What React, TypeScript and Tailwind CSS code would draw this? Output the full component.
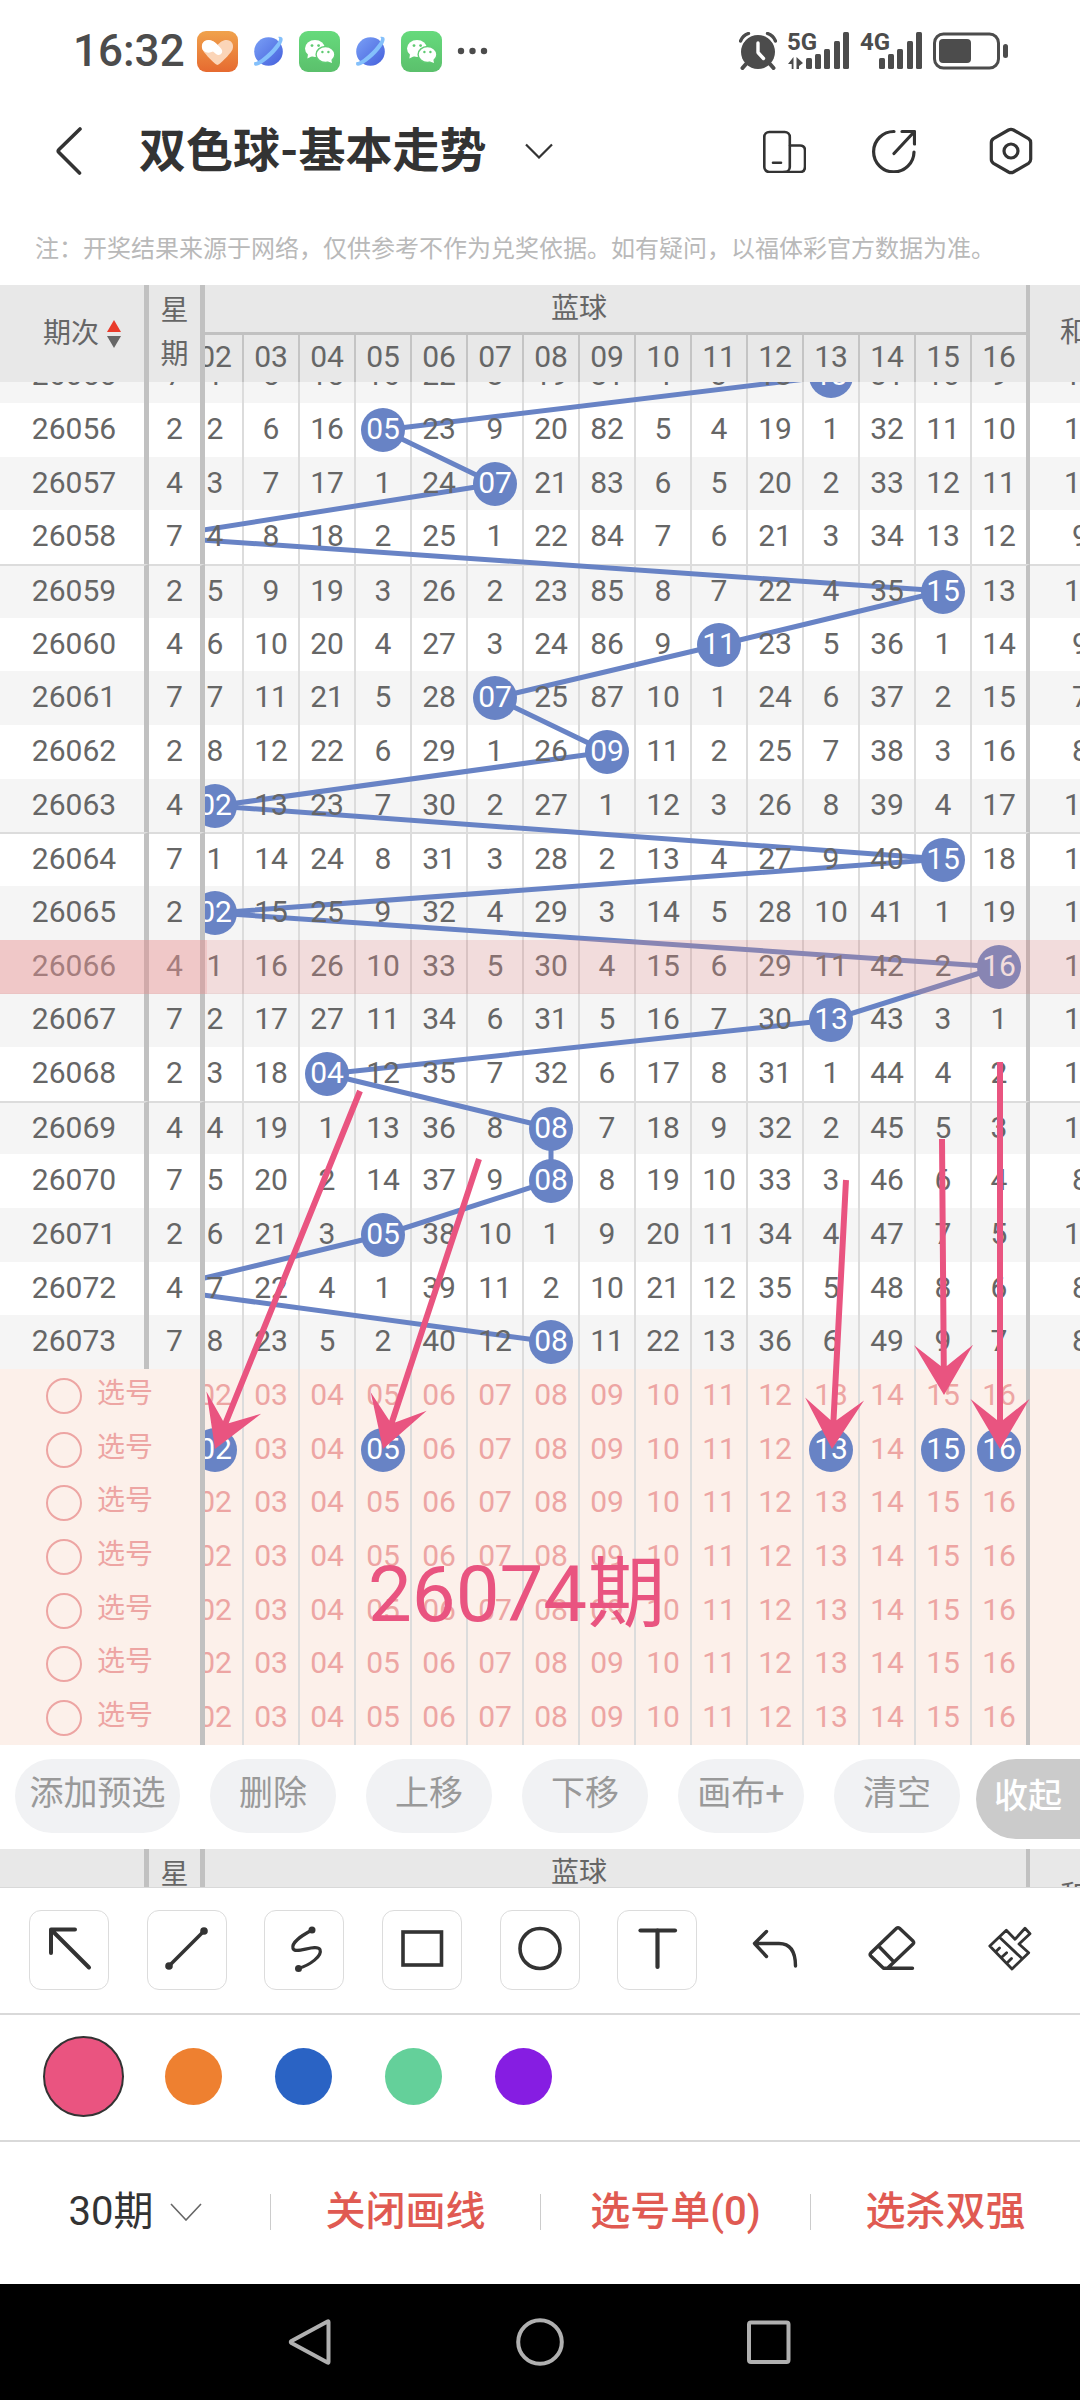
import { useState } from "react";
import type { ReactNode } from "react";

const balls = [2, 3, 4, 5, 6, 7, 8, 9, 10, 11, 12, 13, 14, 15, 16];

// winning blue ball of each issue, first one is 26055
const FIRST_ISSUE = 26055;
const hits = [13, 5, 7, 1, 15, 11, 7, 9, 2, 15, 2, 16, 13, 4, 8, 8, 5, 1, 8];
const sums = ["1", "1", "1", "9", "1", "9", "7", "8", "1", "1", "1", "1", "1", "1", "1", "8", "1", "8", "8"];
const weekdays = [7, 2, 4];
const firstMisses = [1, 5, 15, 16, 22, 8, 19, 81, 4, 3, 18, 0, 31, 10, 9];

const picks: number[][] = [[], [2, 5, 13, 15, 16], [], [], [], [], []];
const SELECTED_ISSUE = 26066;

const colors = [
  { name: "粉色", bg: "bg-[#ea5480]" },
  { name: "橙色", bg: "bg-[#ee8030]" },
  { name: "蓝色", bg: "bg-[#2a63c4]" },
  { name: "绿色", bg: "bg-[#64d09a]" },
  { name: "紫色", bg: "bg-[#861de2]" }
];

const arrows = [
  { x1: 360, y1: 742, x2: 215, y2: 1100 },
  { x1: 479, y1: 810, x2: 383, y2: 1100 },
  { x1: 846, y1: 831, x2: 832, y2: 1100 },
  { x1: 942, y1: 790, x2: 944, y2: 1046 },
  { x1: 1000, y1: 713, x2: 1000, y2: 1100 }
];

const pad = (n: number) => String(n).padStart(2, "0");

// rows are 54, 54, 53 px tall, repeating
const rowTop = (i: number) => i * 54 - Math.floor(i / 3);

function buildRows() {
  let misses = firstMisses;
  return hits.map((hit, i) => {
    if (i > 0) {
      misses = misses.map((m, b) => (hit === balls[b] ? 0 : m + 1));
    }
    return { issue: FIRST_ISSUE + i, week: weekdays[i % 3], hit, misses, sum: sums[i] };
  });
}

const rows = buildRows();

function WechatIcon() {
  return (
    <svg className="size-[41px]" viewBox="0 0 41 41">
      <defs>
        <linearGradient id="wx" x1="0" y1="0" x2="0" y2="1">
          <stop offset="0" stopColor="#66da7c" />
          <stop offset="1" stopColor="#5bc06c" />
        </linearGradient>
      </defs>
      <rect width="41" height="41" rx="9" fill="url(#wx)" />
      <ellipse cx="16" cy="17.5" rx="10" ry="8.5" fill="#fff" />
      <path d="M9 23l-.6 4.4 5-2.4z" fill="#fff" />
      <ellipse cx="26.5" cy="23.5" rx="9.4" ry="8" fill="#fff" stroke="#61cd75" strokeWidth="1.4" />
      <path d="M29 30.5l4 1.6-.8-4z" fill="#fff" />
      <circle cx="13" cy="14.6" r="1.4" fill="#5fca72" />
      <circle cx="19.6" cy="14.6" r="1.4" fill="#5fca72" />
      <circle cx="23.4" cy="21" r="1.2" fill="#5fca72" />
      <circle cx="29.4" cy="21" r="1.2" fill="#5fca72" />
    </svg>
  );
}

function PlanetIcon() {
  return (
    <svg className="size-[41px]" viewBox="0 0 41 41">
      <defs>
        <linearGradient id="planet" x1="0" y1="0" x2="1" y2="1">
          <stop offset="0" stopColor="#7aa0f6" />
          <stop offset="1" stopColor="#4560dc" />
        </linearGradient>
      </defs>
      <circle cx="20.5" cy="20.5" r="14.3" fill="url(#planet)" />
      <path
        d="M6.5 31c-1.4 3.2.4 4.6 4.4 3 7-3 18-13 22.5-21.5 2.2-4.5 1.8-7.5-3.4-6.5 2.2 1 1 3.6-1.8 7.2C23 20 16.5 26 11.5 29.2c-2.4 1.4-4 1.9-5 1.8z"
        fill="#84c0fb"
      />
    </svg>
  );
}

function HeartIcon() {
  return (
    <svg className="size-[41px]" viewBox="0 0 41 41">
      <defs>
        <linearGradient id="heart" x1="0" y1="0" x2="0" y2="1">
          <stop offset="0" stopColor="#f0a24c" />
          <stop offset="1" stopColor="#e66a30" />
        </linearGradient>
      </defs>
      <rect width="41" height="41" rx="9" fill="url(#heart)" />
      <path
        d="M20.5 34c-1.6 0-13.5-11.5-15-15.5C3.5 13 7 9 11.5 9c4 0 6.5 2.5 9 5 2.5-2.5 5-5 9-5 4.5 0 8 4 6 9.5C34 22.5 22.1 34 20.5 34z"
        fill="#fbd5b8"
      />
      <path
        d="M5.5 18.5C3.5 13 7 9 11.5 9c5 0 8.500 4 12.500 8.500 3.500 4-1.500 8.500-5 5.500l-3-2.500c-4 2-7.500 1.500-10.500-2z"
        fill="#fff"
      />
    </svg>
  );
}

function Signal({ label, data }: { label: string; data?: boolean }) {
  return (
    <svg className="h-[41px] w-[63px] overflow-visible" viewBox="0 0 63 41" fill="#4c4c4c">
      <text x="0" y="19" fontSize="24" fontWeight="700" fontFamily="Roboto, sans-serif">
        {label}
      </text>
      {data && <path d="M6.500 26v12h-1.800v-5H1zM9.500 38V26l6.500 6-4 3v3z" />}
      <rect x="19" y="27" width="6" height="11" rx="1.5" />
      <rect x="28" y="23" width="6" height="15" rx="1.5" />
      <rect x="37" y="18" width="6" height="20" rx="1.5" />
      <rect x="47" y="10" width="6" height="28" rx="1.5" />
      <rect x="56" y="1" width="6" height="37" rx="1.5" />
    </svg>
  );
}

function StatusBar() {
  return (
    <div className="flex h-[102px] items-center justify-between pl-[73px] pr-[70px] text-[#4c4c4c]">
      <div className="flex items-center gap-2.5">
        <span className="w-[114px] text-[44px] font-medium leading-none">16:32</span>
        <HeartIcon />
        <PlanetIcon />
        <WechatIcon />
        <PlanetIcon />
        <WechatIcon />
        <svg className="size-[41px]" viewBox="0 0 41 41" fill="#4c4c4c">
          <circle cx="9" cy="20" r="3.2" />
          <circle cx="20.5" cy="20" r="3.2" />
          <circle cx="32" cy="20" r="3.2" />
        </svg>
      </div>
      <div className="flex items-center gap-2.5">
        <svg className="size-[38px]" viewBox="0 0 38 38">
          <circle cx="19" cy="20" r="17" fill="#4c4c4c" />
          <path d="M7 32l-3.500 4M31 32l3.500 4" stroke="#4c4c4c" strokeWidth="4" strokeLinecap="round" />
          <path d="M2 9.500c1.500-4 4-6.500 8-7.500M36 9.500c-1.500-4-4-6.500-8-7.500" fill="none" stroke="#fff" strokeWidth="6" />
          <path d="M1.500 9c1.500-3.500 3.500-6 8-7.500M36.500 9c-1.500-3.500-3.500-6-8-7.500" fill="none" stroke="#4c4c4c" strokeWidth="3.400" strokeLinecap="round" />
          <path d="M19 11v9.500l5.500 6" fill="none" stroke="#fff" strokeWidth="3.400" strokeLinecap="round" strokeLinejoin="round" />
        </svg>
        <Signal label="5G" data />
        <Signal label="4G" />
        <svg className="h-[38px] w-[77px]" viewBox="0 0 77 38">
          <rect x="1.5" y="2" width="64" height="34" rx="9" fill="none" stroke="#4c4c4c" strokeWidth="3" />
          <rect x="6" y="7" width="32" height="24" rx="4" fill="#4c4c4c" />
          <rect x="70" y="12" width="5" height="14" rx="2.5" fill="#4c4c4c" />
        </svg>
      </div>
    </div>
  );
}

function TitleBar() {
  return (
    <header className="flex h-[98px] items-center pl-12 pr-10 text-[#333]">
      <button aria-label="返回" className="w-[91px]">
        <svg className="h-12 w-11" viewBox="0 0 44 48" fill="none" stroke="#333" strokeWidth="3.6" strokeLinecap="round" strokeLinejoin="round">
          <path d="M32 2L11 22.500q-1.500 1.500 0 3L31.500 46" />
        </svg>
      </button>
      <button className="flex items-center gap-[38px]">
        <h1 className="text-[47px] font-bold leading-[60px]">双色球-基本走势</h1>
        <svg className="h-4 w-7" viewBox="0 0 28 16" fill="none" stroke="#333" strokeWidth="2.2">
          <path d="M1 1.500l13 13 13-13" />
        </svg>
      </button>
      <div className="ml-auto flex items-center gap-[66px]">
        <button aria-label="横屏">
          <svg className="size-11" viewBox="0 0 44 44" fill="none" stroke="#333" strokeWidth="2.6" strokeLinecap="round">
            <rect x="2.3" y="3" width="25.5" height="40" rx="5" />
            <path d="M28 16.500h10q5 0 5 5v16q0 5.500-5 5.500H22M11 33.800h8" />
          </svg>
        </button>
        <button aria-label="分享">
          <svg className="size-11" viewBox="0 0 44 44" fill="none" stroke="#333" strokeWidth="3.2" strokeLinecap="round" strokeLinejoin="round">
            <path d="M22 2.500A20.200 20.200 0 1 0 42 23M22 24.500L42 3M30 2.500h12.500V15" />
          </svg>
        </button>
        <button aria-label="设置" className="flex w-[58px] justify-center">
          <svg className="h-12 w-11" viewBox="0 0 44 48" fill="none" stroke="#333" strokeWidth="3.2" strokeLinejoin="round">
            <path d="M19.500 3q2.500-1.300 5 0l15 8.700q2.200 1.400 2.200 4v16.600q0 2.600-2.200 4L24.500 45q-2.500 1.300-5 0l-15-8.700q-2.200-1.400-2.200-4V15.700q0-2.600 2.200-4z" />
            <circle cx="22" cy="24" r="7" />
          </svg>
        </button>
      </div>
    </header>
  );
}

function TableHead({ sortable }: { sortable?: boolean }) {
  return (
    <div className="flex bg-[#e8e8e8] text-[28px] leading-none text-[#666]">
      <table className="w-[205px] shrink-0 table-fixed border-separate border-spacing-0">
        <thead>
          <tr className="h-[97px]">
            <th className="w-[149px] border-r-5 border-[#c1c1c1] p-0 font-normal">
              {sortable && (
                <button className="mx-auto flex items-center gap-2 pl-5">
                  期次
                  <svg className="h-7 w-3.5" viewBox="0 0 14 28">
                    <path d="M7 0l7 12H0z" fill="#e93a2a" />
                    <path d="M7 28l7-12H0z" fill="#666" />
                  </svg>
                </button>
              )}
            </th>
            <th className="border-r-5 border-[#c1c1c1] p-0 px-2.5 pb-0.5 font-normal leading-[44px]">
              星<br />期
            </th>
          </tr>
        </thead>
      </table>
      <div className="min-w-0 flex-1 overflow-hidden">
        <div className="-ml-[17px]">
          <table className="w-full table-fixed border-separate border-spacing-0">
            <colgroup>
              {balls.map((b) => (
                <col key={b} className={b === 16 ? "w-[58px]" : "w-14"} />
              ))}
              <col />
            </colgroup>
            <thead>
              <tr className="h-[50px]">
                <th colSpan={15} className="border-b-3 border-r-4 border-[#c1c1c1] p-0 pr-14 font-normal">
                  蓝球
                </th>
                <th rowSpan={2} className="p-0 pb-0.5 pl-[30px] text-left font-normal">
                  和
                </th>
              </tr>
              <tr className="h-[47px] text-[30px]">
                {balls.map((b) => (
                  <th
                    key={b}
                    className={b === 16 ? "border-r-4 border-[#c1c1c1] p-0 pb-1 font-normal" : "border-r-2 border-[#c4c4c4] p-0 pb-1 font-normal"}
                  >
                    {pad(b)}
                  </th>
                ))}
              </tr>
            </thead>
          </table>
        </div>
      </div>
    </div>
  );
}

const cell = "relative mx-auto flex size-11 items-center justify-center rounded-full pb-0.5";
const hitCell = "relative mx-auto flex size-11 items-center justify-center rounded-full bg-[#6883c5] pb-0.5 text-white";

function rowClass(i: number) {
  return i % 2 === 0 ? "h-[54px] bg-[#f5f5f5] nth-[3n]:h-[53px]" : "h-[54px] bg-white nth-[3n]:h-[53px]";
}

// a rule separates every five issues
function ruleClass(issue: number) {
  return issue % 5 === 4 ? "border-t-2 border-t-[#dcdcdc]" : "";
}

function IssueTable() {
  return (
    <table className="w-[205px] shrink-0 table-fixed border-separate border-spacing-0">
      <colgroup>
        <col className="w-[149px]" />
        <col className="w-14" />
      </colgroup>
      <tbody>
        {rows.map((row, i) => (
          <tr key={row.issue} className={rowClass(i)}>
            <td className={`border-r-5 border-r-[#c1c1c1] p-0 pb-0.5 pl-1 text-center ${ruleClass(row.issue)}`}>{row.issue}</td>
            <td className={`border-r-5 border-r-[#c1c1c1] p-0 pb-0.5 text-center ${ruleClass(row.issue)}`}>{row.week}</td>
          </tr>
        ))}
        {picks.map((_, i) => (
          <tr key={i} className="h-[54px] bg-[#fcf0ea] nth-[3n]:h-[53px]">
            <td colSpan={2} className="border-r-5 border-r-[#c1c1c1] p-0">
              <label className="flex items-center gap-[15px] pl-[46px] text-[28px] text-[#eda5a3]">
                <input type="radio" name="pick" className="size-9 appearance-none rounded-full border-2 border-[#eda5a3]" />
                <span className="pb-1">选号</span>
              </label>
            </td>
          </tr>
        ))}
      </tbody>
    </table>
  );
}

function TrendTable() {
  const points = hits.map((hit, i) => `${27 + (hit - 2) * 56},${rowTop(i) + 27}`).join(" ");

  return (
    <div className="min-w-0 flex-1 overflow-hidden">
      <div className="relative -ml-[17px]">
        <svg className="absolute inset-0 size-full" fill="none" stroke="#6883c5" strokeWidth="5">
          <polyline points={points} />
        </svg>
        <table className="w-full table-fixed border-separate border-spacing-0">
          <colgroup>
            {balls.map((b) => (
              <col key={b} className={b === 16 ? "w-[58px]" : "w-14"} />
            ))}
            <col />
          </colgroup>
          <tbody>
            {rows.map((row, i) => (
              <tr key={row.issue} className={rowClass(i)}>
                {balls.map((b, c) => (
                  <td
                    key={b}
                    className={`p-0 ${b === 16 ? "border-r-4 border-r-[#c1c1c1]" : "border-r-2 border-r-[#dcdcdc]"} ${ruleClass(row.issue)}`}
                  >
                    {row.hit === b ? <span className={hitCell}>{pad(b)}</span> : <span className={cell}>{row.misses[c]}</span>}
                  </td>
                ))}
                <td className={`p-0 pb-0.5 ${row.sum === "1" ? "pl-[34px]" : "pl-[42px]"} ${ruleClass(row.issue)}`}>{row.sum}</td>
              </tr>
            ))}
            {picks.map((picked, i) => (
              <tr key={i} className="h-[54px] bg-[#fcf0ea] text-[#eda5a3] nth-[3n]:h-[53px]">
                {balls.map((b) => (
                  <td key={b} className={b === 16 ? "border-r-4 border-[#c1c1c1] p-0" : "border-r-2 border-[#dcdcdc] p-0"}>
                    <button className={picked.includes(b) ? hitCell : cell}>{pad(b)}</button>
                  </td>
                ))}
                <td className="p-0" />
              </tr>
            ))}
          </tbody>
        </table>
      </div>
    </div>
  );
}

function Arrow({ x1, y1, x2, y2 }: { x1: number; y1: number; x2: number; y2: number }) {
  const length = Math.hypot(x2 - x1, y2 - y1);
  const angle = (Math.atan2(y2 - y1, x2 - x1) * 180) / Math.PI - 90;
  return (
    <g transform={`translate(${x2} ${y2}) rotate(${angle})`}>
      <path d={`M-3 ${-length}H3V-29L29.5-50 0 0-29.5-50-3-29z`} />
    </g>
  );
}

function Chart() {
  const selectedTop = rowTop(SELECTED_ISSUE - FIRST_ISSUE);

  return (
    <div className="overflow-hidden">
      <div className="relative -mt-[33px] flex text-[30px] leading-none text-[#666]">
        <IssueTable />
        <TrendTable />
        <div className="absolute inset-x-0 h-[54px] bg-[#d48c8c]/30" style={{ top: selectedTop }} />
        <div className="absolute left-0 h-[54px] w-[207px] bg-[#ec9c9c]/30" style={{ top: selectedTop }} />
        <svg className="pointer-events-none absolute inset-0 size-full" fill="#e95480">
          {arrows.map((a) => (
            <Arrow key={a.x1} {...a} />
          ))}
        </svg>
        <div className="absolute left-[368px] top-[1207px] text-[78px] text-[#e95480]">26074期</div>
      </div>
    </div>
  );
}

function ActionBar() {
  return (
    <div className="flex h-[104px] items-start pl-[15px] pt-3.5 text-[34px] leading-none text-[#999]">
      <div className="flex gap-[30px]">
        <button className="h-[74px] w-[165px] rounded-full bg-[#f1f2f4] pb-1.5">添加预选</button>
        {["删除", "上移", "下移", "画布+", "清空"].map((label) => (
          <button key={label} className="h-[74px] w-[126px] rounded-full bg-[#f1f2f4] pb-1.5">
            {label}
          </button>
        ))}
      </div>
      <button className="ml-auto h-20 w-[104px] rounded-l-full bg-[#cbcbcb] pb-1.5 font-medium text-white">收起</button>
    </div>
  );
}

function Tool({ label, framed, children }: { label: string; framed?: boolean; children: ReactNode }) {
  return (
    <button aria-label={label} className={framed ? "size-20 rounded-xl border border-[#dcdcdc]" : "size-20 border border-transparent"}>
      <svg className="-m-px size-20" viewBox="0 0 80 80" fill="none" stroke="#333" strokeWidth="3.6" strokeLinecap="round" strokeLinejoin="round">
        {children}
      </svg>
    </button>
  );
}

function DrawTools() {
  return (
    <div className="flex h-32 items-start justify-between border-b-2 border-t border-[#d9d9d9] pl-[29px] pr-[30px] pt-[22px]">
      <Tool label="箭头" framed>
        <path d="M46 19.500H22V43M23 20.500L60 57.500" strokeWidth="4" />
      </Tool>
      <Tool label="直线" framed>
        <path d="M22 56L57 21" />
        <circle cx="22" cy="56" r="3.8" fill="#333" stroke="none" />
        <circle cx="57" cy="21" r="3.8" fill="#333" stroke="none" />
      </Tool>
      <Tool label="曲线" framed>
        <path d="M48 20C38 25.500 27 32 29 38.500 31 45 52 33 56 39.500 58.500 46 46 55 34.500 58.500" strokeWidth="3.2" />
        <circle cx="48" cy="20" r="3.5" fill="#333" stroke="none" />
        <circle cx="34.5" cy="58.5" r="3.5" fill="#333" stroke="none" />
      </Tool>
      <Tool label="矩形" framed>
        <rect x="21" y="22" width="38.5" height="33" strokeLinejoin="miter" />
      </Tool>
      <Tool label="圆形" framed>
        <circle cx="40" cy="38.5" r="20" />
      </Tool>
      <Tool label="文字" framed>
        <line x1="23.5" y1="20.5" x2="58" y2="20.5" strokeWidth="4.2" />
        <line x1="40.5" y1="20.5" x2="40.5" y2="57" strokeWidth="4.2" />
      </Tool>
      <Tool label="撤销">
        <path d="M31.500 21.500L19.500 33.500l12 13M19.500 33.500H44C56 33.500 60.500 42 60.500 56" strokeWidth="3.4" />
      </Tool>
      <Tool label="橡皮擦">
        <path d="M44.500 18.300q1.500-1.300 3 0L61 31q1.300 1.500 0 3L35.500 58.300h-4L18.800 46q-1.300-1.500 0-3zM27 36.500l15 15.500M34 58.300H60.500" strokeWidth="3.4" />
      </Tool>
      <Tool label="清除画线">
        <path d="M36.300 20.300l8.700 9 10-11 5 5.400L49 34l9.700 8.700L42 59 19.800 36zM30 27.700l21.800 20.600M25.500 42l4-4M32 47l4.600-4.300M37.500 52.500l4-4" strokeWidth="2.8" />
      </Tool>
    </div>
  );
}

function ColorBar() {
  const [active, setActive] = useState("粉色");

  return (
    <div className="flex h-[127px] items-center border-b-2 border-[#d9d9d9] pb-0.5 pl-7">
      {colors.map((c) => (
        <label key={c.name} className="flex w-[110px] justify-center">
          <input
            type="radio"
            name="color"
            aria-label={c.name}
            checked={active === c.name}
            onChange={() => setActive(c.name)}
            className={`size-[57px] appearance-none rounded-full checked:size-[81px] checked:border-2 checked:border-[#333] ${c.bg}`}
          />
        </label>
      ))}
    </div>
  );
}

function BottomBar() {
  return (
    <div className="grid h-[142px] grid-cols-4 items-center pb-0.5 text-[40px] leading-[48px]">
      <label className="flex items-center justify-center gap-4 text-[#333]">
        <select aria-label="期数" className="appearance-none bg-transparent">
          <option>30期</option>
        </select>
        <svg className="h-[18px] w-8" viewBox="0 0 32 18" fill="none" stroke="#666" strokeWidth="1.6">
          <path d="M1 1l15 16L31 1" />
        </svg>
      </label>
      {["关闭画线", "选号单(0)", "选杀双强"].map((label) => (
        <div key={label} className="flex h-9 items-center border-l border-[#ccc]">
          <button className="w-full font-medium text-[#e05a52]">{label}</button>
        </div>
      ))}
    </div>
  );
}

function SystemNav() {
  return (
    <nav className="flex h-[116px] items-center justify-center gap-[182px] bg-black">
      <button aria-label="后退">
        <svg className="size-12" viewBox="0 0 48 48" fill="none" stroke="#b0b0b0" strokeWidth="4" strokeLinejoin="round">
          <path d="M41.500 3.500q1-.5 1 .5v40q0 1-1 .5L5.500 25q-1.500-1 0-2z" />
        </svg>
      </button>
      <button aria-label="主页">
        <svg className="size-12" viewBox="0 0 48 48" fill="none" stroke="#b0b0b0" strokeWidth="4">
          <circle cx="24" cy="24" r="21.8" />
        </svg>
      </button>
      <button aria-label="最近任务">
        <svg className="size-12" viewBox="0 0 48 48" fill="none" stroke="#b0b0b0" strokeWidth="4">
          <rect x="3" y="4.5" width="39.5" height="39.5" rx="2" />
        </svg>
      </button>
    </nav>
  );
}

export default function App() {
  return (
    <div className="min-h-screen overflow-hidden bg-white font-['Roboto','Noto_Sans_CJK_SC',sans-serif]">
      <StatusBar />
      <TitleBar />
      <p className="pb-[18px] pl-[35px] pt-[31px] text-2xl leading-9 text-[#b9b9b9]">
        注：开奖结果来源于网络，仅供参考不作为兑奖依据。如有疑问，以福体彩官方数据为准。
      </p>
      <TableHead sortable />
      <Chart />
      <ActionBar />
      <div className="h-[38px] overflow-hidden">
        <TableHead />
      </div>
      <DrawTools />
      <ColorBar />
      <BottomBar />
      <SystemNav />
    </div>
  );
}
